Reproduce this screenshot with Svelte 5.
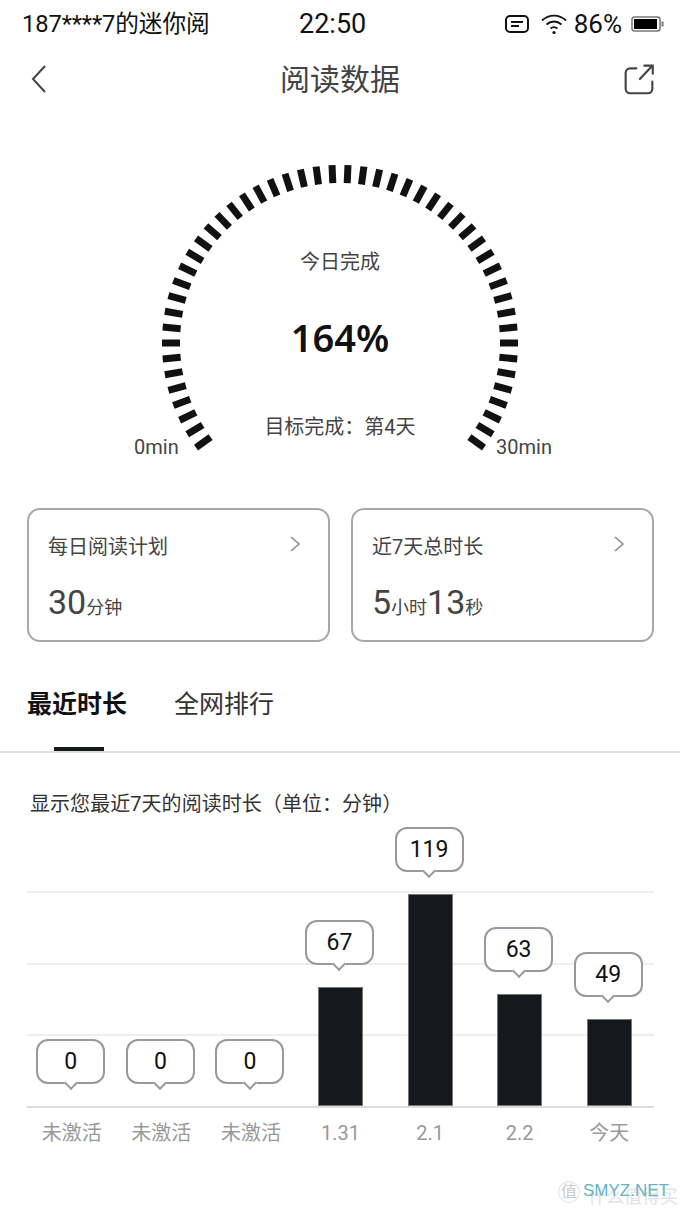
<script lang="ts">
	const ticks = Array.from({ length: 50 }, (_, i) => -126 + i * (252 / 49));

	const gridLines = [0, 1, 2];

	const days = [
		{ label: '未激活', value: 0, height: 0 },
		{ label: '未激活', value: 0, height: 0 },
		{ label: '未激活', value: 0, height: 0 },
		{ label: '1.31', value: 67, height: 119 },
		{ label: '2.1', value: 119, height: 212 },
		{ label: '2.2', value: 63, height: 112 },
		{ label: '今天', value: 49, height: 87 }
	];
</script>

<div class="page">
	<div class="status">
		<span class="carrier">187****7的迷你阅</span>
		<span class="time">22:50</span>
		<div class="status-right">
			<svg width="26" height="20" viewBox="0 0 26 20" fill="none" stroke="#111" stroke-width="2">
				<rect x="2" y="2" width="22" height="16" rx="4" />
				<path d="M7 8h12M7 12h8" />
			</svg>
			<svg class="wifi" width="28" height="22" viewBox="0 0 28 22" fill="none" stroke="#111" stroke-width="1.8">
				<path d="M2 7.5C9 1 19 1 26 7.5" />
				<path d="M6.5 11.5C11 7.5 17 7.5 21.5 11.5" />
				<path d="M10.5 15.5C12.5 14 15.5 14 17.5 15.5" />
				<circle cx="14" cy="19.5" r="1.6" fill="#111" stroke="none" />
			</svg>
			<span class="pct">86%</span>
			<svg width="33" height="18" viewBox="0 0 33 18">
				<rect x="1" y="2" width="28" height="14" rx="2.5" fill="none" stroke="#777" stroke-width="1.5" />
				<rect x="3" y="4" width="23" height="10" fill="#000" />
				<rect x="30.5" y="6.5" width="2" height="5" fill="#777" />
			</svg>
		</div>
	</div>

	<div class="nav">
		<svg class="back" width="18" height="30" viewBox="0 0 18 30" fill="none" stroke="#444" stroke-width="2">
			<path d="M15 2 3 15l12 13" />
		</svg>
		<h1>阅读数据</h1>
		<svg width="32" height="32" viewBox="0 0 36 36" fill="none" stroke="#444" stroke-width="2.4" stroke-linecap="round">
			<path d="M15 6H8a5 5 0 0 0-5 5v18a5 5 0 0 0 5 5h20a5 5 0 0 0 5-5v-8" />
			<path d="M19 18 33 3M24 3h9.500v9" />
		</svg>
	</div>

	<section class="gauge">
		<svg class="dial" width="680" height="397" viewBox="0 0 680 397">
			{#each ticks as angle}
				<rect x="336.500" y="54" width="7" height="18" fill="#111" transform="rotate({angle} 340 232)" />
			{/each}
		</svg>
		<div class="gauge-text">
			<div class="today">今日完成</div>
			<div class="percent">164%</div>
			<div class="goal">目标完成：第4天</div>
		</div>
		<span class="end start">0min</span>
		<span class="end finish">30min</span>
	</section>

	<div class="cards">
		<div class="card">
			<div class="card-title">
				<span>每日阅读计划</span>
				<svg width="12" height="18" viewBox="0 0 12 18" fill="none" stroke="#888" stroke-width="1.5"><path d="M2 2l8 7-8 7" /></svg>
			</div>
			<div class="card-value"><b>30</b><small>分钟</small></div>
		</div>
		<div class="card">
			<div class="card-title">
				<span>近7天总时长</span>
				<svg width="12" height="18" viewBox="0 0 12 18" fill="none" stroke="#888" stroke-width="1.5"><path d="M2 2l8 7-8 7" /></svg>
			</div>
			<div class="card-value"><b>5</b><small>小时</small><b>13</b><small>秒</small></div>
		</div>
	</div>

	<div class="tabs">
		<div class="tab active">最近时长</div>
		<div class="tab">全网排行</div>
	</div>

	<p class="hint">显示您最近7天的阅读时长（单位：分钟）</p>

	<div class="chart">
		<div class="grid">
			{#each gridLines as line}
				<div class="grid-line" data-line={line}></div>
			{/each}
		</div>
		<div class="columns">
			{#each days as day}
				<div class="column">
					<div class="bubble">{day.value}</div>
					{#if day.height}
						<div class="bar" style="height: {day.height}px"></div>
					{/if}
				</div>
			{/each}
		</div>
	</div>
	<div class="labels">
		{#each days as day}
			<span>{day.label}</span>
		{/each}
	</div>

	<div class="watermark">
		<span class="seal">值</span>
		<span class="mark-cn">什么值得买</span>
		<span class="mark-en">SMYZ.NET</span>
	</div>
</div>

<style>
	:global(body) {
		background: #fff;
	}

	.page {
		position: relative;
		width: 680px;
		height: 1209px;
		overflow: hidden;
		background: #fff;
		color: #444;
		font-family: Roboto, "Noto Sans CJK SC", sans-serif;
	}

	.status {
		position: relative;
		display: flex;
		align-items: center;
		justify-content: space-between;
		height: 46px;
		padding: 0 16px 0 22px;
		color: #111;
	}

	.carrier {
		font-size: 23.700px;
		letter-spacing: -0.1px;
		transform: translateY(-1px);
	}

	.time {
		position: absolute;
		left: 299px;
		top: 8px;
		font-size: 27px;
	}

	.status-right {
		display: flex;
		align-items: center;
		gap: 6px;
		margin-top: 2px;
	}

	.wifi {
		margin-left: 4px;
	}

	.pct {
		font-size: 26px;
		margin-right: 3px;
	}

	.nav {
		position: relative;
		display: flex;
		align-items: center;
		justify-content: space-between;
		height: 65px;
		padding: 0 25px 0 30px;
	}

	h1 {
		position: absolute;
		left: 0;
		right: 0;
		top: 12px;
		margin: 0;
		font-size: 30px;
		line-height: 44px;
		font-weight: 400;
		color: #444;
		text-align: center;
	}

	.gauge {
		position: relative;
		height: 397px;
	}

	.dial {
		position: absolute;
		inset: 0;
	}

	.gauge-text {
		position: relative;
		display: flex;
		flex-direction: column;
		align-items: center;
		padding-top: 137px;
	}

	.today {
		font-size: 20px;
		line-height: 28px;
	}

	.percent {
		margin-top: 37px;
		font-size: 38px;
		line-height: 48px;
		font-weight: 600;
		color: #111;
		font-family: "Noto Sans", sans-serif;
	}

	.goal {
		margin-top: 52px;
		font-size: 20px;
		line-height: 28px;
	}

	.end {
		position: absolute;
		top: 323px;
		font-size: 20px;
		line-height: 26px;
	}

	.start {
		left: 134px;
	}

	.finish {
		left: 496px;
	}

	.cards {
		display: flex;
		gap: 21px;
		padding: 0 26px 0 27px;
	}

	.card {
		flex: 1;
		height: 134px;
		box-sizing: border-box;
		padding: 22px 27px 0 19px;
		border: 2px solid #a8a8a8;
		border-radius: 13px;
	}

	.card-title {
		display: flex;
		align-items: flex-start;
		justify-content: space-between;
		font-size: 20px;
		line-height: 30px;
	}

	.card-title svg {
		margin-top: 3px;
	}

	.card-value {
		margin-top: 18px;
		display: flex;
		align-items: baseline;
		line-height: 44px;
	}

	.card-value b {
		font-size: 34px;
		font-weight: 400;
	}

	.card-value small {
		font-size: 18px;
	}

	.tabs {
		display: flex;
		gap: 47px;
		height: 111px;
		box-sizing: border-box;
		padding: 45px 0 0 27px;
		border-bottom: 2px solid #ddd;
	}

	.tab {
		position: relative;
		font-size: 25px;
		line-height: 36px;
		color: #333;
		height: 64px;
	}

	.tab.active {
		font-weight: 700;
		color: #111;
	}

	.tab.active::after {
		content: '';
		position: absolute;
		left: 27px;
		bottom: 0;
		width: 50px;
		height: 4px;
		background: #15191e;
	}

	.hint {
		margin: 37px 0 0 30px;
		font-size: 20px;
		line-height: 28px;
		letter-spacing: 0.05px;
		color: #333;
	}

	.chart {
		position: relative;
		height: 288px;
		margin: 0 26px 0 27px;
		border-bottom: 2px solid #ddd;
	}

	.grid {
		position: absolute;
		left: 0;
		right: 0;
		top: 73px;
		display: flex;
		flex-direction: column;
		gap: 69.500px;
	}

	.grid-line {
		height: 2px;
		background: #eee;
	}

	.columns {
		position: relative;
		display: grid;
		grid-template-columns: repeat(7, 1fr);
		height: 100%;
	}

	.column {
		display: flex;
		flex-direction: column;
		justify-content: flex-end;
		align-items: center;
	}

	.bubble {
		position: relative;
		box-sizing: border-box;
		width: 69px;
		height: 45px;
		margin-bottom: 22px;
		transform: translateX(-1px);
		border: 2px solid #999;
		border-radius: 12px;
		background: #fff;
		color: #111;
		font-size: 23px;
		line-height: 41px;
		text-align: center;
	}

	.bubble::after {
		content: '';
		position: absolute;
		left: 50%;
		bottom: -6px;
		width: 8px;
		height: 8px;
		margin-left: -5px;
		background: #fff;
		border-right: 2px solid #999;
		border-bottom: 2px solid #999;
		transform: rotate(45deg);
	}

	.bar {
		width: 45px;
		background: #15191e;
		box-shadow: 0 0 0 1px #777 inset;
	}

	.labels {
		display: grid;
		grid-template-columns: repeat(7, 1fr);
		margin: 10px 26px 0 27px;
		font-size: 20px;
		line-height: 30px;
		color: #999;
		text-align: center;
	}

	.watermark {
		position: absolute;
		left: 558px;
		top: 1176px;
		display: flex;
		align-items: center;
		width: 122px;
		height: 30px;
	}

	.seal {
		box-sizing: border-box;
		width: 22px;
		height: 22px;
		margin-top: 2px;
		border: 1px solid #e2e2e2;
		border-radius: 50%;
		font-size: 16px;
		line-height: 20px;
		text-align: center;
		color: #ccc;
	}

	.mark-cn {
		margin: 8px 0 0 8px;
		font-size: 18px;
		color: #e2e2e2;
	}

	.mark-en {
		position: absolute;
		left: 25px;
		top: 0;
		font-size: 17px;
		line-height: 30px;
		color: #5fb4c6;
		font-family: "Liberation Sans", sans-serif;
	}
</style>
